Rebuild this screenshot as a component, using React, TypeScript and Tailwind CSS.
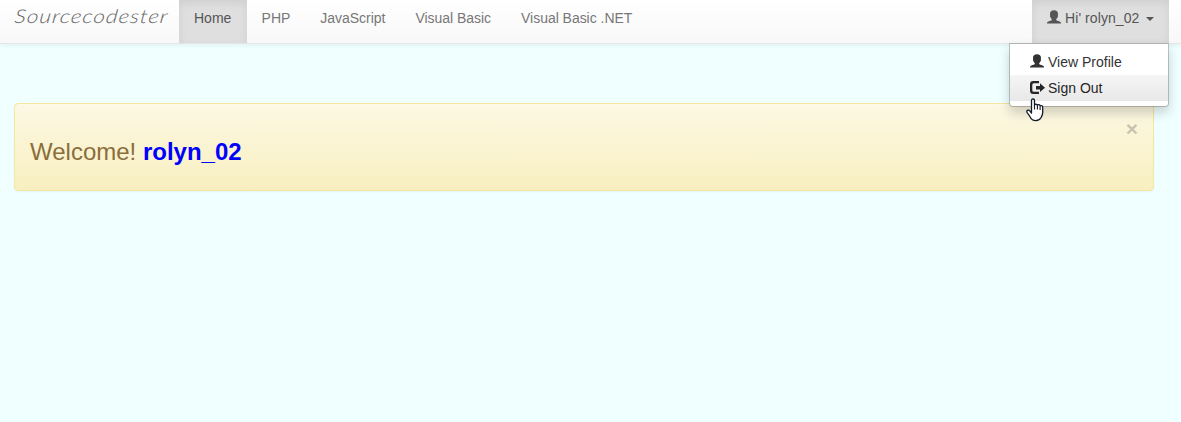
import React from "react";

function UserIcon({ className = "" }: { className?: string }) {
  return (
    <svg viewBox="0 0 14 14" className={`h-[14px] w-[14px] shrink-0 ${className}`} fill="currentColor">
      <path d="M7 .3C4.500.3 3 1.700 3 3.900c0 .6.1 1.100.2 1.500-.4.3-.3 1.100.2 1.600.3 1 .8 1.700 1.400 2.200v.8C4.300 10.600 2.900 10.800 1.500 11.400.5 11.800 0 12.300 0 13v.6h14V13c0-.7-.5-1.200-1.500-1.600C11.100 10.800 9.700 10.600 9.200 10v-.8c.6-.5 1.100-1.200 1.400-2.200.5-.5.6-1.300.2-1.600.1-.4.2-.9.2-1.500C11 1.700 9.500.3 7 .3Z" />
    </svg>
  );
}

function SignOutIcon() {
  return (
    <svg viewBox="0 0 15 13" className="mt-[3px] -mr-px h-[13px] w-[15px] shrink-0" fill="currentColor">
      <path d="M9 0H3.300Q0 0 0 3.300v6.200Q0 13 3.300 13H9v-2.200H3.800Q2.300 10.800 2.300 9.300V3.700q0-1.500 1.500-1.500H9Z" />
      <path d="M10 2.300 15 6.700l-5 4.300V8.500H6V5h4Z" />
    </svg>
  );
}

function HandPointer() {
  return (
    <svg viewBox="0 0 18 24" className="absolute top-[98px] left-[1026px] z-20 h-[24px] w-[18px]">
      <path
        d="M5.500 15V2.500Q5.500 1 7 1t1.500 1.500V7q.3-.9 1.400-.9 1.300 0 1.500 1.200.4-.7 1.400-.6 1.200.1 1.300 1.300.5-.6 1.400-.4 1.200.2 1.200 1.600v5.300c0 2.500-1 3.700-1.600 5-1 2-2.500 3.100-5.300 3.100-3.400 0-4.700-1.500-5.500-3.300C3.400 17.300 2 16 1 14.200c-.5-1 .1-1.900 1-2 .9-.1 1.500.4 2 1Z"
        fill="#fff"
        stroke="#111827"
        strokeWidth="1.300"
        strokeLinejoin="round"
      />
      <path d="M8.500 6.500v5M11.400 7.500v4M14.100 8.500v3.500" stroke="#111827" strokeWidth="1.100" fill="none" />
    </svg>
  );
}

const links = ["PHP", "JavaScript", "Visual Basic", "Visual Basic .NET"];

export default function App() {
  return (
    <div className="relative h-[422px] w-full overflow-hidden bg-[#f0ffff] font-['Liberation_Sans',Arial,sans-serif] text-[14px] leading-[20px] text-[#333]">
      <nav className="flex h-[44px] border-b border-[#e4e7e7] bg-linear-to-b from-white to-[#f8f8f8] pr-[12px] text-[#777] shadow-[0_1px_5px_rgba(0,0,0,0.075)]">
        <a className="w-[179px] shrink-0 pt-[6px] pl-[15px] font-[Lato,sans-serif] text-[19px] whitespace-nowrap text-[#666] italic">
          <span className="inline-block origin-left scale-x-[1.19] -skew-x-6 font-light tracking-[0.8px]">
            Sourcecodester
          </span>
        </a>
        <a className="h-[43px] w-[68px] bg-[#dfdfdf] px-[15px] pt-[8px] text-[#555] shadow-[inset_0_3px_9px_rgba(0,0,0,0.075)]">
          Home
        </a>
        <div className="-ml-[0.4px] flex">
          {links.map((label) => (
            <a key={label} className="px-[15px] pt-[8px] tracking-[-0.03px] whitespace-nowrap">
              {label}
            </a>
          ))}
        </div>
        <div className="relative ml-auto h-[43px] w-[137px]">
          <a className="flex h-[43px] gap-[4px] bg-[#dfdfdf] pt-[8px] pl-[15px] whitespace-nowrap text-[#555] shadow-[inset_0_3px_9px_rgba(0,0,0,0.075)]">
            <UserIcon className="mt-[2px]" />
            <span className="w-[75px] tracking-[0.08px]">Hi' rolyn_02</span>
            <svg viewBox="0 0 8 4" className="mt-[9px] ml-[2px] h-[4px] w-[8px]" fill="currentColor">
              <path d="M0 0h8L4 4Z" />
            </svg>
          </a>
          <div className="absolute top-[43px] right-0 z-10 h-[64px] w-[160px] rounded-b-[4px] border border-black/20 bg-white bg-clip-padding py-[5px] text-[#333] shadow-[0_6px_12px_rgba(0,0,0,0.175)]">
            <a className="flex h-[26px] gap-[4px] px-[20px] py-[3px]">
              <UserIcon className="mt-[2px]" />
              View Profile
            </a>
            <a className="flex h-[26px] gap-[4px] bg-linear-to-b from-[#f5f5f5] to-[#e8e8e8] px-[20px] py-[3px] text-[#262626]">
              <SignOutIcon />
              Sign Out
            </a>
          </div>
        </div>
      </nav>

      <div className="mt-[59px] ml-[14px] flex h-[88px] w-[1140px] justify-between rounded-[4px] border border-[#f5e79e] bg-linear-to-b from-[#fcf8e3] to-[#f8efc0] px-[15px] text-[#8a6d3b] shadow-[inset_0_1px_0_rgba(255,255,255,0.25),0_1px_2px_rgba(0,0,0,0.05)]">
        <h3 className="pt-[35px] text-[24px] leading-[26px]">
          Welcome! <b className="font-bold text-[#0000ff]">rolyn_02</b>
        </h3>
        <button className="mt-[14px] h-[21px] text-[21px] leading-[21px] font-bold text-black opacity-20">×</button>
      </div>
      <HandPointer />
    </div>
  );
}
